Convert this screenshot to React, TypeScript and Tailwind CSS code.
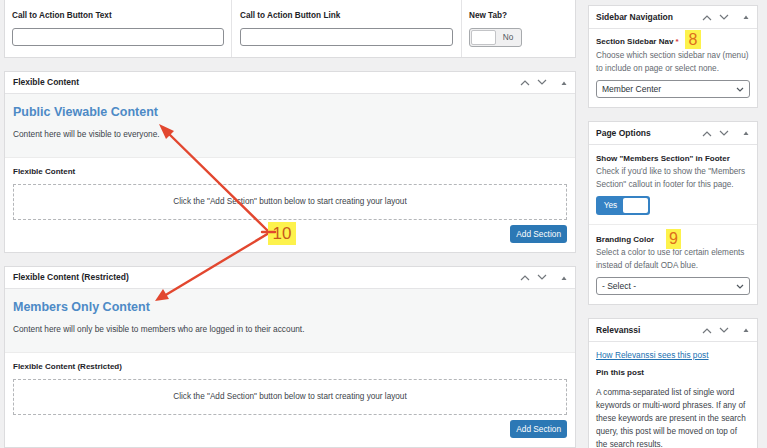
import React from "react";

const Up = () => (
  <svg width="10" height="7" viewBox="0 0 10 7" fill="none">
    <path d="M1 6 L5 2 L9 6" stroke="#72777c" strokeWidth="1.2" />
  </svg>
);
const Down = () => (
  <svg width="10" height="7" viewBox="0 0 10 7" fill="none">
    <path d="M1 1 L5 5 L9 1" stroke="#72777c" strokeWidth="1.2" />
  </svg>
);
const Tri = () => (
  <svg width="6" height="4" viewBox="0 0 6 4">
    <path d="M0.5 4 L3 0.5 L5.5 4 Z" fill="#72777c" />
  </svg>
);

const HeaderIcons = () => (
  <div className="flex items-center gap-[7px]">
    <Up />
    <Down />
    <span className="ml-[7px] flex">
      <Tri />
    </span>
  </div>
);

const Chevron = () => (
  <svg width="8" height="5" viewBox="0 0 8 5" fill="none">
    <path d="M1 1 L4 4 L7 1" stroke="#50575e" strokeWidth="1.2" />
  </svg>
);

const Select = ({ value }: { value: string }) => (
  <div className="h-[18px] border border-[#8c8f94] rounded-[3px] bg-white flex items-center justify-between pl-[5px] pr-[5px] text-[8.5px] text-[#2c3338]">
    <span>{value}</span>
    <Chevron />
  </div>
);

const Badge = ({ children, className }: { children: React.ReactNode; className: string }) => (
  <span
    className={`absolute bg-[#fdf24c] text-[#dd6d1c] flex items-center justify-center leading-none text-[16px] ${className}`}
  >
    {children}
  </span>
);

const FlexPanel = ({ title, heading, desc }: { title: string; heading: string; desc: string }) => (
  <section className="bg-white border border-[#dcdcde]">
    <div className="h-[22px] flex items-center justify-between px-[8px] border-b border-[#e4e4e6]">
      <span className="text-[8.5px] font-bold text-[#1d2327]">{title}</span>
      <HeaderIcons />
    </div>
    <div className="bg-[#f6f7f7] px-[8px] pt-[10px] pb-[18px] border-b border-[#ececec]">
      <h2 className="text-[12.5px] leading-[16px] font-bold text-[#4d8ac6]">{heading}</h2>
      <p className="mt-[9px] text-[8.3px] leading-[10px] text-[#3c434a]">{desc}</p>
    </div>
    <div className="px-[8px] pt-[9px] pb-[9px]">
      <div className="text-[8px] leading-[10px] font-bold text-[#1d2327]">{title}</div>
      <div className="mt-[7px] h-[36px] border border-dashed border-[#b4b6b9] flex items-center justify-center text-[8.2px] text-[#3c434a]">
        Click the "Add Section" button below to start creating your layout
      </div>
      <div className="mt-[5px] flex justify-end">
        <button className="h-[18px] px-[6px] rounded-[3px] bg-[#2c78b5] text-white text-[8.3px]">
          Add Section
        </button>
      </div>
    </div>
  </section>
);

const SidePanel = ({ title, children }: { title: string; children: React.ReactNode }) => (
  <section className="bg-white border border-[#dcdcde]">
    <div className="h-[23px] flex items-center justify-between pl-[7px] pr-[8px] border-b border-[#e4e4e6]">
      <span className="text-[8.5px] font-bold text-[#1d2327]">{title}</span>
      <HeaderIcons />
    </div>
    {children}
  </section>
);

export default function App() {
  return (
    <div className="relative w-[767px] h-[448px] overflow-hidden bg-[#f0f0f1] font-['Liberation_Sans',Arial,sans-serif]">
      <div className="flex gap-[12px] pl-[4px]">
        {/* main column */}
        <main className="w-[572px] flex flex-col gap-[13px] -mt-px">
          <section className="bg-white border border-[#dcdcde] grid grid-cols-[227px_230px_1fr]">
            <div className="px-[7px] pt-[11px] pb-[10px] border-r border-[#e4e4e6]">
              <div className="text-[8.2px] leading-[10px] font-bold text-[#1d2327]">Call to Action Button Text</div>
              <div className="mt-[7px] h-[18px] border border-[#8c8f94] rounded-[3px]" />
            </div>
            <div className="px-[8px] pt-[11px] pb-[10px] border-r border-[#e4e4e6]">
              <div className="text-[8.2px] leading-[10px] font-bold text-[#1d2327]">Call to Action Button Link</div>
              <div className="mt-[7px] h-[18px] border border-[#8c8f94] rounded-[3px]" />
            </div>
            <div className="px-[7px] pt-[11px] pb-[10px]">
              <div className="text-[8.2px] leading-[10px] font-bold text-[#1d2327]">New Tab?</div>
              <div className="mt-[7px] w-[53px] h-[19px] border border-[#a7aaad] rounded-[3px] bg-[#f0f0f1] flex items-center p-[1px]">
                <div className="w-[25px] h-full bg-white border border-[#c3c4c7] rounded-[2px]" />
                <span className="flex-1 text-center text-[8.3px] text-[#50575e]">No</span>
              </div>
            </div>
          </section>

          <FlexPanel
            title="Flexible Content"
            heading="Public Viewable Content"
            desc="Content here will be visible to everyone."
          />
          <FlexPanel
            title="Flexible Content (Restricted)"
            heading="Members Only Content"
            desc="Content here will only be visible to members who are logged in to their account."
          />
        </main>

        {/* sidebar */}
        <aside className="w-[170px] flex flex-col gap-[13px] pt-[5px]">
          <SidePanel title="Sidebar Navigation">
            <div className="relative px-[7px] pt-[8px] pb-[9px]">
              <div className="text-[8px] leading-[10px] font-bold text-[#1d2327]">
                Section Sidebar Nav <span className="text-[#d63638]">*</span>
              </div>
              <Badge className="left-[96px] top-[1px] w-[16px] h-[19px]">8</Badge>
              <p className="mt-[2px] text-[8.2px] leading-[13px] text-[#646970]">
                Choose which section sidebar nav (menu) to include on page or select none.
              </p>
              <div className="mt-[5px]">
                <Select value="Member Center" />
              </div>
            </div>
          </SidePanel>

          <SidePanel title="Page Options">
            <div className="px-[7px] pt-[9px] pb-[9px] border-b border-[#ececec]">
              <div className="text-[8px] leading-[10px] font-bold text-[#1d2327]">
                Show "Members Section" in Footer
              </div>
              <p className="mt-[2px] text-[8.2px] leading-[12.5px] text-[#646970]">
                Check if you'd like to show the "Members Section" callout in footer for this page.
              </p>
              <div className="mt-[5px] w-[54px] h-[19px] rounded-[3px] bg-[#3582c4] flex items-center p-[2px]">
                <span className="flex-1 text-center text-[8.3px] text-white">Yes</span>
                <div className="w-[25px] h-full bg-white rounded-[2px]" />
              </div>
            </div>
            <div className="relative px-[7px] pt-[10px] pb-[9px]">
              <div className="text-[8px] leading-[10px] font-bold text-[#1d2327]">Branding Color</div>
              <Badge className="left-[77px] top-[4px] w-[15px] h-[20px]">9</Badge>
              <p className="mt-[2px] text-[8.2px] leading-[12.5px] text-[#646970]">
                Select a color to use for certain elements instead of default ODA blue.
              </p>
              <div className="mt-[5px]">
                <Select value="- Select -" />
              </div>
            </div>
          </SidePanel>

          <SidePanel title="Relevanssi">
            <div className="px-[7px] pt-[7px]">
              <a className="block text-[8.3px] leading-[12px] text-[#2271b1] underline">How Relevanssi sees this post</a>
              <div className="mt-[7px] text-[8px] leading-[10px] font-bold text-[#1d2327]">Pin this post</div>
              <p className="mt-[8px] text-[8.2px] leading-[13px] text-[#3c434a]">
                A comma-separated list of single word keywords or multi-word phrases. If any of these keywords are present in the search query, this post will be moved on top of the search results.
              </p>
            </div>
          </SidePanel>
        </aside>
      </div>

      {/* annotation arrows */}
      <svg className="absolute left-0 top-0 pointer-events-none" width="767" height="448" viewBox="0 0 767 448">
        <g stroke="#e2472f" strokeWidth="2.4" strokeLinecap="round">
          <line x1="269" y1="232" x2="167" y2="132" />
          <line x1="269" y1="233" x2="164" y2="296" />
        </g>
        <path d="M159 124 L174 131 L166 139 Z" fill="#e2472f" />
        <path d="M155 301 L163 289 L169 299 Z" fill="#e2472f" />
      </svg>
      <span className="absolute left-[268px] top-[222px] w-[28px] h-[23px] bg-[#fdf24c] text-[#c8591c] text-[17px] leading-none flex items-center justify-center">
        10
      </span>
      <svg className="absolute left-0 top-0 pointer-events-none" width="767" height="448" viewBox="0 0 767 448">
        <g stroke="#e2472f" strokeWidth="2.4" strokeLinecap="round">
          <line x1="275" y1="232" x2="262" y2="232" />
        </g>
      </svg>
    </div>
  );
}
